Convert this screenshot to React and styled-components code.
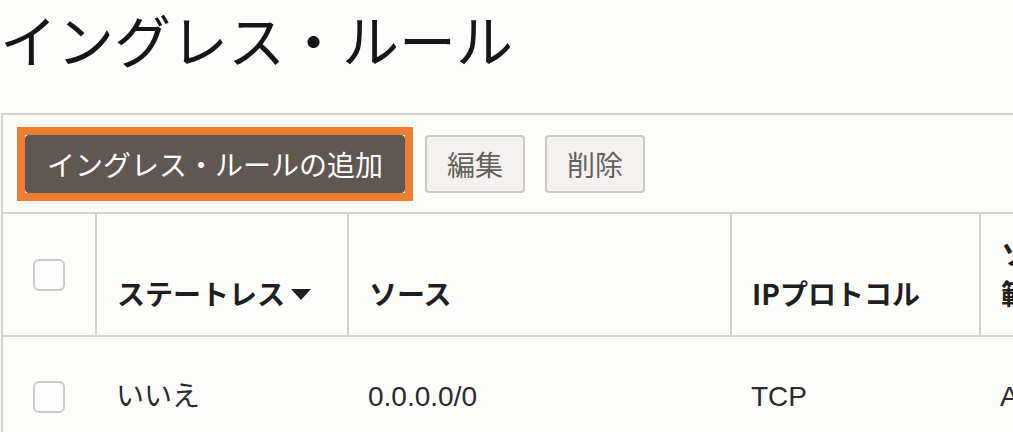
import React from "react";
import styled, { createGlobalStyle } from "styled-components";

const Global = createGlobalStyle`
  html, body { margin: 0; padding: 0; background: #fdfdfc; }
  body {
    font-family: "Liberation Sans", "Noto Sans CJK JP", sans-serif;
    color: #1e1e1e;
    overflow: hidden;
  }
`;

const Page = styled.div`
  width: 1013px;
  height: 432px;
  overflow: hidden;
`;

const Title = styled.h1`
  margin: 0;
  padding: 2px 0 0 0;
  height: 105px;
  box-sizing: border-box;
  font-family: "Noto Sans CJK JP", sans-serif;
  font-weight: 400;
  font-size: 57px;
  line-height: 72px;
  letter-spacing: 0;
  color: #161616;
  white-space: nowrap;
`;

const Panel = styled.div`
  margin: 8px 0 0 1px;
  width: 1200px;
  border: 2px solid #d5d1ce;
  border-right: none;
  border-bottom: none;
  background: #fdfdfc;
`;

const Toolbar = styled.div`
  display: flex;
  align-items: center;
  padding: 12px 14px 11px 14px;
  border-bottom: 2px solid #d5d1ce;
`;

const Highlight = styled.div`
  display: flex;
  border: 8px solid #ee7d31;
  margin-right: 12px;
`;

const Button = styled.button`
  box-sizing: border-box;
  height: 58px;
  width: ${(p) => p.$w}px;
  margin-right: ${(p) => p.$mr || 0}px;
  padding: 0;
  border-radius: 4px;
  font-family: "Noto Sans CJK JP", sans-serif;
  font-size: 28px;
  line-height: 1;
  cursor: pointer;
  border: 2px solid ${(p) => (p.$primary ? "#5e5752" : "#ccc8c5")};
  background: ${(p) => (p.$primary ? "#5e5752" : "#f3f2f1")};
  color: ${(p) => (p.$primary ? "#ffffff" : "#655f5b")};
`;

const Grid = styled.div`
  display: grid;
  grid-template-columns: 92px 252px 383px 249px 300px;
`;

const HeadCell = styled.div`
  box-sizing: border-box;
  height: 123px;
  border-left: ${(p) => (p.$first ? "none" : "2px solid #d5d1ce")};
  border-bottom: 2px solid #d5d1ce;
  display: flex;
  align-items: ${(p) => (p.$first ? "flex-start" : "flex-end")};
  justify-content: ${(p) => (p.$first ? "center" : "flex-start")};
  padding: ${(p) => (p.$first ? "45px 0 0 0" : "0 10px 22px 20px")};
  font-family: "Noto Sans CJK JP", sans-serif;
  font-weight: 700;
  font-size: 28px;
  line-height: 40px;
  color: #1f1f1f;
  white-space: pre-line;
`;

const BodyCell = styled.div`
  box-sizing: border-box;
  height: 120px;
  display: flex;
  align-items: flex-start;
  justify-content: ${(p) => (p.$first ? "center" : "flex-start")};
  padding: ${(p) => (p.$first ? "44px 0 0 0" : "44px 10px 0 21px")};
  font-family: "Liberation Sans", "Noto Sans CJK JP", sans-serif;
  font-size: 28px;
  line-height: 32px;
  color: #2a2a2a;
`;

const Check = styled.span`
  display: inline-block;
  box-sizing: border-box;
  width: 32px;
  height: 32px;
  border: 2px solid #cdc9c6;
  border-radius: 6px;
  background: #fefefe;
`;

const SortArrow = styled.svg`
  margin-left: 6px;
  margin-bottom: 13px;
`;

export default function App() {
  return (
    <Page>
      <Global />
      <Title>イングレス・ルール</Title>
      <Panel>
        <Toolbar>
          <Highlight>
            <Button $primary $w={380}>イングレス・ルールの追加</Button>
          </Highlight>
          <Button $w={100} $mr={20}>編集</Button>
          <Button $w={100}>削除</Button>
        </Toolbar>
        <Grid>
          <HeadCell $first>
            <Check />
          </HeadCell>
          <HeadCell>
            ステートレス
            <SortArrow width="20" height="11" viewBox="0 0 20 11">
              <path d="M0 0 H20 L10 11 Z" fill="#1f1f1f" />
            </SortArrow>
          </HeadCell>
          <HeadCell>ソース</HeadCell>
          <HeadCell>IPプロトコル</HeadCell>
          <HeadCell>{"ソース・ポート\n範囲"}</HeadCell>

          <BodyCell $first>
            <Check />
          </BodyCell>
          <BodyCell>いいえ</BodyCell>
          <BodyCell>0.0.0.0/0</BodyCell>
          <BodyCell>TCP</BodyCell>
          <BodyCell>All</BodyCell>
        </Grid>
      </Panel>
    </Page>
  );
}
